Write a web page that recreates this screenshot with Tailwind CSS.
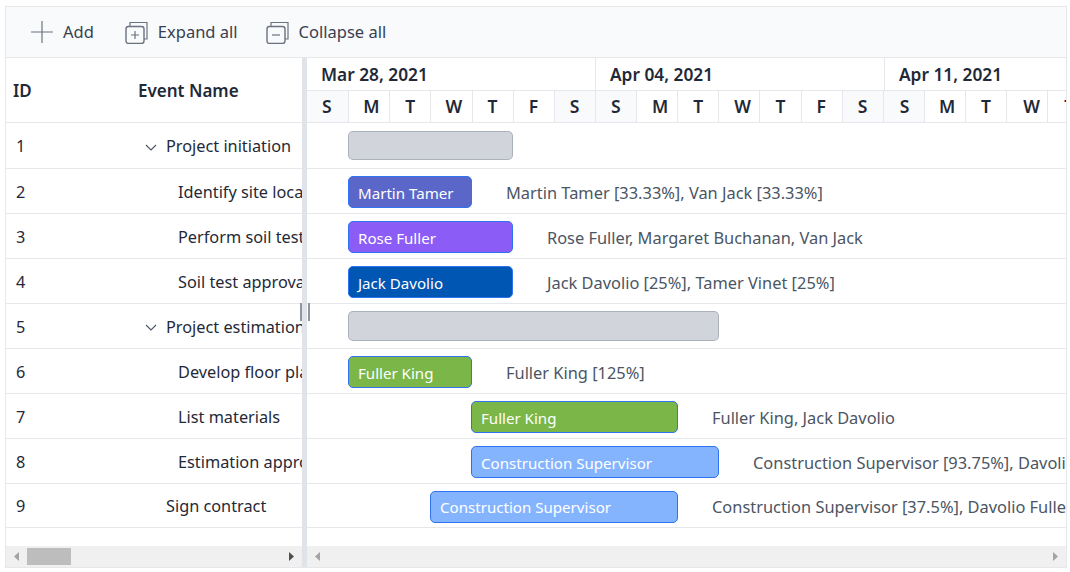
<!DOCTYPE html>
<html>
<head>
<meta charset="utf-8">
<script src="https://cdn.jsdelivr.net/npm/@tailwindcss/browser@4"></script>
</head>
<body class="bg-white font-['Noto_Sans',sans-serif] text-[#1f2937] w-[1070px] h-[572px] overflow-hidden">
<div class="pt-[6px] pl-[5px] w-[1067px]">
<div class="border border-[#e5e7eb] h-[562px] w-[1062px] overflow-hidden relative">
  <!-- toolbar -->
  <div class="h-[51px] bg-[#f9fafb] border-b border-[#e5e7eb] flex items-center text-[16.5px] text-[#374151] leading-none">
    <svg class="ml-[25px] w-[22px] h-[22px]" viewBox="0 0 22 22" fill="none" stroke="#6b7280" stroke-width="1.2"><path d="M0 11H22M11 0V22"/></svg>
    <span class="ml-[10px]">Add</span>
    <svg class="ml-[31px] w-[23px] h-[23px]" viewBox="0 0 23 23" fill="none" stroke="#6b7280" stroke-width="1.2"><rect x="1" y="5.5" width="18" height="17" rx="2.5" stroke-width="1.4"/><path d="M5 5V1.5H22V18H19"/><path d="M6 14H14M10 10V18"/></svg>
    <span class="ml-[10px]">Expand all</span>
    <svg class="ml-[28px] w-[23px] h-[23px]" viewBox="0 0 23 23" fill="none" stroke="#6b7280" stroke-width="1.2"><rect x="1" y="5.5" width="18" height="17" rx="2.5" stroke-width="1.4"/><path d="M5 5V1.5H22V18H19"/><path d="M6 14H14"/></svg>
    <span class="ml-[10px]">Collapse all</span>
  </div>
  <div class="flex h-[509px]">
    <!-- left grid -->
    <div class="w-[296px] shrink-0 flex flex-col overflow-hidden">
      <div class="h-[65px] pt-[2px] border-b border-[#e5e7eb] flex items-center font-semibold text-[17px] shrink-0">
        <span class="w-[132px] pl-[7px]">ID</span><span>Event Name</span>
      </div>
      <div class="h-[46px] pt-[2px] border-b border-[#e5e7eb] flex items-center text-[16.3px] whitespace-nowrap overflow-hidden">
        <span class="w-[151px] pl-[10px] shrink-0 flex justify-between items-center">1<svg class="w-[12px] h-[12px]" viewBox="0 0 12 12" fill="none" stroke="#4b5563" stroke-width="1.1"><path d="M1 4L6 9L11 4"/></svg></span><span class="ml-[9px]">Project initiation</span>
      </div>
      <div class="h-[45px] pt-[2px] border-b border-[#e5e7eb] flex items-center text-[16.3px] whitespace-nowrap overflow-hidden"><span class="w-[172px] pl-[10px] shrink-0">2</span><span>Identify site location</span></div>
      <div class="h-[45px] pt-[2px] border-b border-[#e5e7eb] flex items-center text-[16.3px] whitespace-nowrap overflow-hidden"><span class="w-[172px] pl-[10px] shrink-0">3</span><span>Perform soil test</span></div>
      <div class="h-[45px] pt-[2px] border-b border-[#e5e7eb] flex items-center text-[16.3px] whitespace-nowrap overflow-hidden"><span class="w-[172px] pl-[10px] shrink-0">4</span><span>Soil test approval</span></div>
      <div class="h-[45px] pt-[2px] border-b border-[#e5e7eb] flex items-center text-[16.3px] whitespace-nowrap overflow-hidden">
        <span class="w-[151px] pl-[10px] shrink-0 flex justify-between items-center">5<svg class="w-[12px] h-[12px]" viewBox="0 0 12 12" fill="none" stroke="#4b5563" stroke-width="1.1"><path d="M1 4L6 9L11 4"/></svg></span><span class="ml-[9px]">Project estimation</span>
      </div>
      <div class="h-[45px] pt-[2px] border-b border-[#e5e7eb] flex items-center text-[16.3px] whitespace-nowrap overflow-hidden"><span class="w-[172px] pl-[10px] shrink-0">6</span><span>Develop floor plan</span></div>
      <div class="h-[45px] pt-[2px] border-b border-[#e5e7eb] flex items-center text-[16.3px] whitespace-nowrap overflow-hidden"><span class="w-[172px] pl-[10px] shrink-0">7</span><span>List materials</span></div>
      <div class="h-[45px] pt-[2px] border-b border-[#e5e7eb] flex items-center text-[16.3px] whitespace-nowrap overflow-hidden"><span class="w-[172px] pl-[10px] shrink-0">8</span><span>Estimation approval</span></div>
      <div class="h-[44px] pt-[2px] border-b border-[#e5e7eb] flex items-center text-[16.3px] whitespace-nowrap overflow-hidden"><span class="w-[160px] pl-[10px] shrink-0">9</span><span>Sign contract</span></div>
      <div class="flex-1"></div>
      <div class="h-[21px] bg-[#f0f0f0] flex items-center shrink-0">
        <svg class="ml-[7px] w-[6px] h-[9px]" viewBox="0 0 6 9" fill="#a3a3a3"><path d="M6 0V9L1 4.5Z"/></svg>
        <div class="ml-[8px] w-[44px] h-[17px] bg-[#bdbdbd]"></div>
        <svg class="ml-[218px] w-[6px] h-[9px]" viewBox="0 0 6 9" fill="#505050"><path d="M0 0V9L5 4.5Z"/></svg>
      </div>
    </div>
    <!-- splitter -->
    <div class="w-[5px] shrink-0 bg-[#e0e3e8]"></div>
    <!-- chart -->
    <div class="flex-1 min-w-0 flex flex-col overflow-hidden">
      <div class="h-[65px] border-b border-[#e5e7eb] shrink-0 overflow-hidden">
        <div class="flex h-[33px] border-b border-[#e5e7eb] w-[900px] font-semibold text-[17.3px] items-center">
          <div class="w-[289px] h-full pl-[14px] pt-[2px] border-r border-[#e5e7eb] flex items-center shrink-0">Mar 28, 2021</div>
          <div class="w-[289px] h-full pl-[14px] pt-[2px] border-r border-[#e5e7eb] flex items-center shrink-0">Apr 04, 2021</div>
          <div class="w-[288px] h-full pl-[14px] pt-[2px] flex items-center shrink-0">Apr 11, 2021</div>
        </div>
        <div class="flex h-[31px] w-[800px] font-semibold text-[17.5px]">
          <div class="w-[42.14px] shrink-0 pl-[15px] border-r border-[#e5e7eb] bg-[#f9fafb] flex items-center">S</div>
          <div class="w-[41.14px] shrink-0 pl-[14px] border-r border-[#e5e7eb] flex items-center">M</div>
          <div class="w-[41.14px] shrink-0 pl-[15px] border-r border-[#e5e7eb] flex items-center">T</div>
          <div class="w-[41.14px] shrink-0 pl-[14px] border-r border-[#e5e7eb] flex items-center">W</div>
          <div class="w-[41.14px] shrink-0 pl-[15px] border-r border-[#e5e7eb] flex items-center">T</div>
          <div class="w-[41.14px] shrink-0 pl-[15px] border-r border-[#e5e7eb] flex items-center">F</div>
          <div class="w-[41.14px] shrink-0 pl-[15px] border-r border-[#e5e7eb] bg-[#f9fafb] flex items-center">S</div>
          <div class="w-[41.14px] shrink-0 pl-[15px] border-r border-[#e5e7eb] bg-[#f9fafb] flex items-center">S</div>
          <div class="w-[41.14px] shrink-0 pl-[15px] border-r border-[#e5e7eb] flex items-center">M</div>
          <div class="w-[41.14px] shrink-0 pl-[15px] border-r border-[#e5e7eb] flex items-center">T</div>
          <div class="w-[41.14px] shrink-0 pl-[15px] border-r border-[#e5e7eb] flex items-center">W</div>
          <div class="w-[41.14px] shrink-0 pl-[15px] border-r border-[#e5e7eb] flex items-center">T</div>
          <div class="w-[41.14px] shrink-0 pl-[15px] border-r border-[#e5e7eb] flex items-center">F</div>
          <div class="w-[41.14px] shrink-0 pl-[15px] border-r border-[#e5e7eb] bg-[#f9fafb] flex items-center">S</div>
          <div class="w-[41.14px] shrink-0 pl-[16px] border-r border-[#e5e7eb] bg-[#f9fafb] flex items-center">S</div>
          <div class="w-[41.14px] shrink-0 pl-[14px] border-r border-[#e5e7eb] flex items-center">M</div>
          <div class="w-[41.14px] shrink-0 pl-[15px] border-r border-[#e5e7eb] flex items-center">T</div>
          <div class="w-[41.14px] shrink-0 pl-[16px] border-r border-[#e5e7eb] flex items-center">W</div>
          <div class="w-[41.14px] shrink-0 pl-[16px] border-r border-[#e5e7eb] flex items-center">T</div>
        </div>
      </div>
      <div class="h-[46px] border-b border-[#e5e7eb] flex items-center whitespace-nowrap overflow-hidden">
        <div class="ml-[41px] w-[165px] h-[29px] rounded-[5px] bg-[#d1d5db] border border-[#9ca3af]/70"></div>
      </div>
      <div class="h-[45px] pt-[2px] border-b border-[#e5e7eb] flex items-center whitespace-nowrap overflow-hidden text-[16.4px] text-[#4b5563]">
        <div class="ml-[41px] w-[124px] h-[32px] shrink-0 rounded-[5px] bg-[#5a67c8] border border-[#2f73f2] text-white text-[15.1px] pt-[2px] flex items-center pl-[9px]">Martin Tamer</div>
        <span class="ml-[34px] pt-[2px]">Martin Tamer [33.33%], Van Jack [33.33%]</span>
      </div>
      <div class="h-[45px] pt-[2px] border-b border-[#e5e7eb] flex items-center whitespace-nowrap overflow-hidden text-[16.4px] text-[#4b5563]">
        <div class="ml-[41px] w-[165px] h-[32px] shrink-0 rounded-[5px] bg-[#8b5cf6] border border-[#2f73f2] text-white text-[15.1px] pt-[2px] flex items-center pl-[9px]">Rose Fuller</div>
        <span class="ml-[34px] pt-[2px]">Rose Fuller, Margaret Buchanan, Van Jack</span>
      </div>
      <div class="h-[45px] pt-[2px] border-b border-[#e5e7eb] flex items-center whitespace-nowrap overflow-hidden text-[16.4px] text-[#4b5563]">
        <div class="ml-[41px] w-[165px] h-[32px] shrink-0 rounded-[5px] bg-[#0056b3] border border-[#2f73f2] text-white text-[15.1px] pt-[2px] flex items-center pl-[9px]">Jack Davolio</div>
        <span class="ml-[34px] pt-[2px]">Jack Davolio [25%], Tamer Vinet [25%]</span>
      </div>
      <div class="h-[45px] border-b border-[#e5e7eb] flex items-center whitespace-nowrap overflow-hidden pb-[1px]">
        <div class="ml-[41px] w-[371px] h-[30px] rounded-[5px] bg-[#d1d5db] border border-[#9ca3af]/70"></div>
      </div>
      <div class="h-[45px] pt-[2px] border-b border-[#e5e7eb] flex items-center whitespace-nowrap overflow-hidden text-[16.4px] text-[#4b5563]">
        <div class="ml-[41px] w-[124px] h-[32px] shrink-0 rounded-[5px] bg-[#7ab648] border border-[#2f73f2] text-white text-[15.1px] pt-[2px] flex items-center pl-[9px]">Fuller King</div>
        <span class="ml-[34px] pt-[2px]">Fuller King [125%]</span>
      </div>
      <div class="h-[45px] pt-[2px] border-b border-[#e5e7eb] flex items-center whitespace-nowrap overflow-hidden text-[16.4px] text-[#4b5563]">
        <div class="ml-[164px] w-[207px] h-[32px] shrink-0 rounded-[5px] bg-[#7ab648] border border-[#2f73f2] text-white text-[15.1px] pt-[2px] flex items-center pl-[9px]">Fuller King</div>
        <span class="ml-[34px] pt-[2px]">Fuller King, Jack Davolio</span>
      </div>
      <div class="h-[45px] pt-[2px] border-b border-[#e5e7eb] flex items-center whitespace-nowrap overflow-hidden text-[16.4px] text-[#4b5563]">
        <div class="ml-[164px] w-[248px] h-[32px] shrink-0 rounded-[5px] bg-[#85b4ff] border border-[#2f73f2] text-white text-[15.1px] pt-[2px] flex items-center pl-[9px]">Construction Supervisor</div>
        <span class="ml-[34px] pt-[2px]">Construction Supervisor [93.75%], Davolio Fuller</span>
      </div>
      <div class="h-[44px] pt-[2px] border-b border-[#e5e7eb] flex items-center whitespace-nowrap overflow-hidden text-[16.4px] text-[#4b5563]">
        <div class="ml-[123px] w-[248px] h-[32px] shrink-0 rounded-[5px] bg-[#85b4ff] border border-[#2f73f2] text-white text-[15.1px] pt-[2px] flex items-center pl-[9px]">Construction Supervisor</div>
        <span class="ml-[34px] pt-[2px]">Construction Supervisor [37.5%], Davolio Fuller</span>
      </div>
      <div class="flex-1"></div>
      <div class="h-[21px] bg-[#f0f0f0] flex items-center justify-between px-[7px] shrink-0">
        <svg class="w-[6px] h-[9px]" viewBox="0 0 6 9" fill="#a3a3a3"><path d="M6 0V9L1 4.5Z"/></svg>
        <svg class="w-[6px] h-[9px]" viewBox="0 0 6 9" fill="#a3a3a3"><path d="M0 0V9L5 4.5Z"/></svg>
      </div>
    </div>
  </div>
  <!-- splitter handle -->
  <div class="absolute left-[294px] top-[296px] w-[10px] h-[18px] border-x-2 border-[#8f96a1]"></div>
</div>
</div>
</body>
</html>
